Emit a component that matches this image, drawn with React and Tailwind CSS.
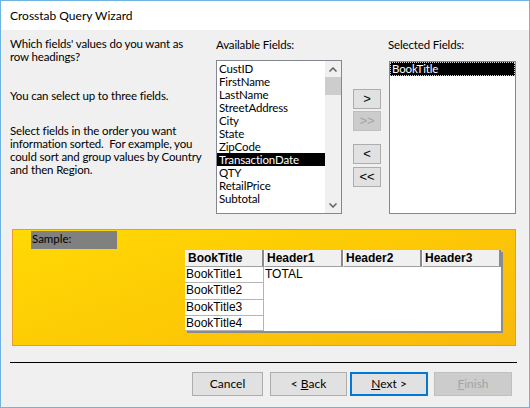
import React from 'react';

const available = [
  'CustID',
  'FirstName',
  'LastName',
  'StreetAddress',
  'City',
  'State',
  'ZipCode',
  'TransactionDate',
  'QTY',
  'RetailPrice',
  'Subtotal',
];

function ArrowButton({ label, disabled, className = '' }) {
  return (
    <div
      className={`h-[20px] w-[28px] flex items-center justify-center border text-[13px] font-['Liberation_Sans',sans-serif] tracking-normal ${
        disabled
          ? 'bg-[#cccccc] border-[#bfbfbf] text-[#a3a3a3]'
          : 'bg-[#e1e1e1] border-[#adadad] text-black'
      } ${className}`}
    >
      {label}
    </div>
  );
}

function WizardButton({ children, width, focused, disabled }) {
  let look = 'bg-[#e1e1e1] border border-[#adadad] text-black';
  if (focused) look = 'bg-[#e1e1e1] border-2 border-[#0078d7] text-black';
  if (disabled) look = 'bg-[#cccccc] border border-[#bfbfbf] text-[#a3a3a3]';
  return (
    <div className={`h-[24px] flex items-center justify-center text-[12px] ${look} ${width}`}>
      {children}
    </div>
  );
}

export default function App() {
  return (
    <div className="w-[530px] h-[408px] border border-[#6fb3e3] bg-[#f0f0f0] flex flex-col text-black font-['Lato','Liberation_Sans',sans-serif] text-[11.5px] tracking-[-0.15px] overflow-hidden">
      {/* title bar */}
      <div className="h-[29px] bg-white flex items-center pl-[9px] pt-[1px] text-[12px] tracking-normal shrink-0">
        Crosstab Query Wizard
      </div>

      {/* field pickers */}
      <div className="flex pl-[9px] pt-[7px]">
        <div className="w-[206px] leading-[13px] whitespace-nowrap">
          <p>
            Which fields' values do you want as
            <br />
            row headings?
          </p>
          <p className="mt-[26px]">You can select up to three fields.</p>
          <p className="mt-[22px]">
            Select fields in the order you want
            <br />
            information sorted.&nbsp; For example, you
            <br />
            could sort and group values by Country
            <br />
            and then Region.
          </p>
        </div>

        <div className="w-[126px] flex flex-col">
          <div className="h-[15px] leading-[15px] mb-[8px]">Available Fields:</div>
          <div className="h-[154px] bg-white border border-[#828790] flex">
            <div className="flex-1 flex flex-col pt-[1px] leading-[13px]">
              {available.map((f) => (
                <div
                  key={f}
                  className={`h-[13px] pl-[2px] whitespace-nowrap ${
                    f === 'TransactionDate' ? 'bg-black text-white' : ''
                  }`}
                >
                  {f}
                </div>
              ))}
            </div>
            <div className="w-[16px] bg-[#f0f0f0] flex flex-col items-center">
              <div className="h-[16px] flex items-center justify-center">
                <svg width="8" height="5" viewBox="0 0 8 5">
                  <path d="M0.5 4.5 L4 1 L7.5 4.5" fill="none" stroke="#606060" strokeWidth="1.5" />
                </svg>
              </div>
              <div className="h-[18px] w-full bg-[#cdcdcd]" />
              <div className="flex-1" />
              <div className="h-[16px] flex items-center justify-center">
                <svg width="8" height="5" viewBox="0 0 8 5">
                  <path d="M0.5 0.5 L4 4 L7.5 0.5" fill="none" stroke="#606060" strokeWidth="1.5" />
                </svg>
              </div>
            </div>
          </div>
        </div>

        <div className="ml-[11px] w-[28px] pt-[52px] flex flex-col">
          <ArrowButton label=">" />
          <ArrowButton label=">>" disabled className="mt-[2px]" />
          <ArrowButton label="<" className="mt-[13px]" />
          <ArrowButton label="<<" className="mt-[3px]" />
        </div>

        <div className="ml-[7px] w-[128px] flex flex-col">
          <div className="h-[15px] leading-[15px] mb-[9px]">Selected Fields:</div>
          <div className="ml-[1px] h-[153px] w-[127px] bg-white border border-[#828790] p-0">
            <div className="h-[14px] leading-[12px] bg-black text-white border border-dotted border-[#d8d8d8] pl-[1px]">
              BookTitle
            </div>
          </div>
        </div>
      </div>

      {/* sample */}
      <div className="ml-[11px] mt-[15px] w-[504px] h-[117px] border border-[#e69b34] bg-[linear-gradient(160deg,#ffd905_0%,#fdcb04_45%,#f9b90c_100%)] flex flex-col font-['Liberation_Sans',sans-serif] tracking-normal">
        <div className="ml-[18px] mt-[1px] w-[86px] h-[18px] bg-[#808080] leading-[16px] pl-[1px] text-[11.5px] font-['Lato',sans-serif]">
          Sample:
        </div>
        <div className="ml-[172px] mt-[1px] w-[316px] shadow-[2px_2px_0_#8c8c8c] text-[12px]">
          <div className="grid grid-cols-4 h-[17px]">
            {['BookTitle', 'Header1', 'Header2', 'Header3'].map((h) => (
              <div
                key={h}
                className="bg-[#f0f0f0] border-r-2 border-b border-r-[#8a8a8a] border-b-[#a0a0a0] border-l border-l-white pl-[2px] font-bold leading-[16px]"
              >
                {h}
              </div>
            ))}
          </div>
          <div className="flex">
            <div className="w-[79px] flex flex-col bg-white">
              {[
                ['BookTitle1', 'h-[16px]'],
                ['BookTitle2', 'h-[17px]'],
                ['BookTitle3', 'h-[16px]'],
                ['BookTitle4', 'h-[15px]'],
              ].map(([t, h]) => (
                <div key={t} className={`${h} border-b border-r border-[#b4b4b4] pl-[1px] leading-[15px]`}>
                  {t}
                </div>
              ))}
            </div>
            <div className="flex-1 bg-white pl-[1px] leading-[15px]">TOTAL</div>
          </div>
        </div>
      </div>

      {/* separator */}
      <div className="ml-[9px] mt-[16px] w-[507px] h-[1px] bg-black" />

      {/* buttons */}
      <div className="flex mt-[9px] pl-[191px] tracking-normal">
        <WizardButton width="w-[71px]">Cancel</WizardButton>
        <div className="w-[7px]" />
        <WizardButton width="w-[77px]">
          &lt; <span className="underline ml-[3px]">B</span>ack
        </WizardButton>
        <div className="w-[3px]" />
        <WizardButton width="w-[78px]" focused>
          <span className="underline">N</span>ext &gt;
        </WizardButton>
        <div className="w-[6px]" />
        <WizardButton width="w-[78px]" disabled>
          <span className="underline">F</span>inish
        </WizardButton>
      </div>
    </div>
  );
}
